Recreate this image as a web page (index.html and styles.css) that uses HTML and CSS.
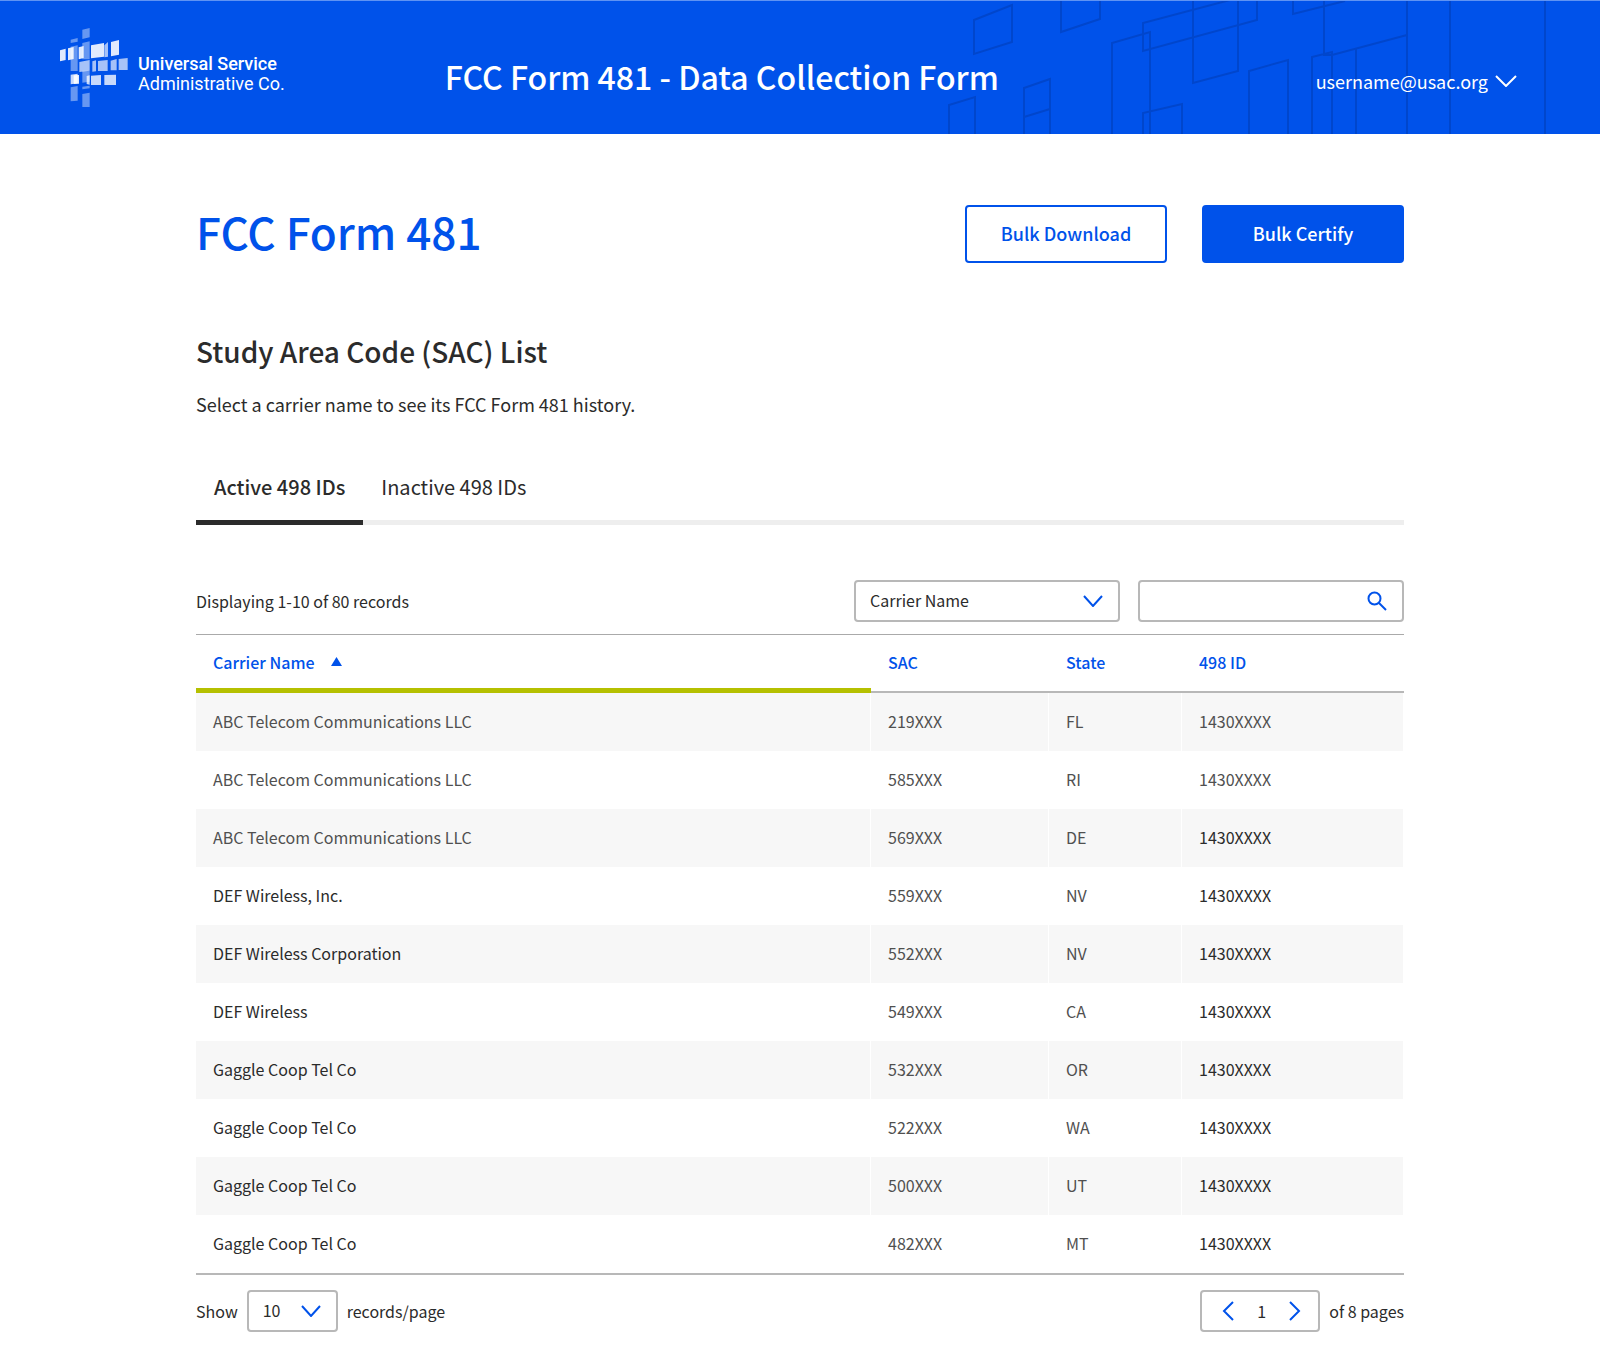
FILE: index.html
```html
<!DOCTYPE html>
<html lang="en">
<head>
<meta charset="utf-8">
<meta name="viewport" content="width=device-width, initial-scale=1">
<title>FCC Form 481 - Data Collection Form</title>
<link rel="stylesheet" href="styles.css">
</head>
<body>
<header class="site-header">
  <svg class="pattern" width="680" height="133" viewBox="920 0 680 133" aria-hidden="true">
    <path d="M974 19 1012 4V41L974 53ZM1061 0V31L1100 18V0M949 133V104L975 96V133M1024 133V87L1050 78V133M1024 116 1050 108M1112 133V42L1150 31V133M1230 -1 1143 22V50L1257 19V0M1193 0V82L1238 70V0M1143 133V112L1182 103V133M1249 133V70L1288 59V133M1293 0V13L1345 0M1324 0V54H1332L1407 34M1407 0V133M1312 133V56L1332 51V133M1356 133V47M1450 0V133M1545 0V133"/>
  </svg>
  <a class="logo" href="#">
    <svg width="68" height="80" viewBox="30 24 204 240" aria-hidden="true">
      <g fill="#fff">
        <g opacity=".4">
          <path d="M97 29 119 24V52L97 57ZM62 59 83 54V65L62 69ZM62 80 83 76V153H62ZM97 69 119 64V118H97ZM97 152H119V185L97 188ZM62 202 83 198V242L62 244ZM97 200 119 197V205L97 208ZM97 222 119 218V261H97Z"/>
        </g>
        <g opacity=".65">
          <path d="M88 126 119 120V152L88 156ZM127 124 138 121V154L127 155ZM144 123 173 120V153H144ZM182 122 200 117V151H182ZM206 117 233 114V150H206ZM163 76 174 66V110L163 112Z"/>
        </g>
        <g opacity=".78">
          <path d="M62 164 83 161V190L62 193ZM110 168 119 166V194L110 192ZM123 167 153 165V195H123ZM163 165 198 164V195H163Z"/>
        </g>
        <g opacity=".88">
          <path d="M30 91 47 86V120L30 124ZM54 85 71 81V117L54 121ZM86 82 101 78V114L86 118ZM123 76 162 69V110L123 115ZM183 66 207 60V104L183 109ZM71 166 87 165V191L71 192Z"/>
        </g>
      </g>
    </svg>
    <span class="logo-text"><strong>Universal Service</strong><span>Administrative Co.</span></span>
  </a>
  <p class="app-title">FCC Form 481 - Data Collection Form</p>
  <button class="user-menu" type="button">username@usac.org
    <svg width="22" height="12" viewBox="0 0 22 12" aria-hidden="true"><path d="M1 1 11 11 21 1"/></svg>
  </button>
</header>

<main class="page">
  <div class="page-head">
    <h1>FCC Form 481</h1>
    <div class="actions">
      <button class="btn btn-outline" type="button">Bulk Download</button>
      <button class="btn btn-solid" type="button">Bulk Certify</button>
    </div>
  </div>

  <h2>Study Area Code (SAC) List</h2>
  <p class="intro">Select a carrier name to see its FCC Form 481 history.</p>

  <div class="tabs" role="tablist">
    <button class="tab tab-active" type="button" role="tab" aria-selected="true">Active 498 IDs</button>
    <button class="tab" type="button" role="tab" aria-selected="false">Inactive 498 IDs</button>
  </div>

  <div class="toolbar">
    <p class="count">Displaying 1-10 of 80 records</p>
    <div class="filters">
      <div class="field field-wide">
        <select class="control" aria-label="Search by"><option>Carrier Name</option><option>SAC</option><option>State</option><option>498 ID</option></select>
        <svg class="field-icon" width="20" height="12" viewBox="0 0 20 12" aria-hidden="true"><path d="M1 1 10 11 19 1"/></svg>
      </div>
      <div class="field field-wide">
        <input class="control" type="search" aria-label="Search records">
        <svg class="field-icon" width="20" height="20" viewBox="0 0 20 20" aria-hidden="true"><circle cx="7.500" cy="7.500" r="6"/><path d="M12 12 19 19"/></svg>
      </div>
    </div>
  </div>

  <table class="records">
    <colgroup><col><col class="col-sac"><col class="col-state"><col class="col-id"></colgroup>
    <thead>
      <tr>
        <th class="sorted" scope="col" aria-sort="ascending"><button class="sort" type="button">Carrier Name <svg width="11" height="9" viewBox="0 0 11 9" aria-hidden="true"><path d="M5.500 0 11 9H0Z"/></svg></button></th>
        <th scope="col"><button class="sort" type="button">SAC</button></th>
        <th scope="col"><button class="sort" type="button">State</button></th>
        <th scope="col"><button class="sort" type="button">498 ID</button></th>
      </tr>
    </thead>
    <tbody>
      <tr><td>ABC Telecom Communications LLC</td><td>219XXX</td><td>FL</td><td>1430XXXX</td></tr>
      <tr><td>ABC Telecom Communications LLC</td><td>585XXX</td><td>RI</td><td>1430XXXX</td></tr>
      <tr><td>ABC Telecom Communications LLC</td><td>569XXX</td><td>DE</td><td class="strong">1430XXXX</td></tr>
      <tr><td class="strong">DEF Wireless, Inc.</td><td>559XXX</td><td>NV</td><td class="strong">1430XXXX</td></tr>
      <tr><td class="strong">DEF Wireless Corporation</td><td>552XXX</td><td>NV</td><td class="strong">1430XXXX</td></tr>
      <tr><td class="strong">DEF Wireless</td><td>549XXX</td><td>CA</td><td class="strong">1430XXXX</td></tr>
      <tr><td class="strong">Gaggle Coop Tel Co</td><td>532XXX</td><td>OR</td><td class="strong">1430XXXX</td></tr>
      <tr><td class="strong">Gaggle Coop Tel Co</td><td>522XXX</td><td>WA</td><td class="strong">1430XXXX</td></tr>
      <tr><td class="strong">Gaggle Coop Tel Co</td><td>500XXX</td><td>UT</td><td class="strong">1430XXXX</td></tr>
      <tr><td class="strong">Gaggle Coop Tel Co</td><td>482XXX</td><td>MT</td><td class="strong">1430XXXX</td></tr>
    </tbody>
  </table>

  <div class="table-foot">
    <div class="page-size">
      <label for="size">Show</label>
      <div class="field field-narrow">
        <select class="control" id="size"><option>10</option><option>20</option><option>50</option></select>
        <svg class="field-icon" width="20" height="12" viewBox="0 0 20 12" aria-hidden="true"><path d="M1 1 10 11 19 1"/></svg>
      </div>
      <span>records/page</span>
    </div>
    <nav class="pager" aria-label="Pagination">
      <div class="pager-box">
        <button class="step" type="button" aria-label="Previous page"><svg width="12" height="20" viewBox="0 0 12 20" aria-hidden="true"><path d="M11 1 2 10 11 19"/></svg></button>
        <input class="page-number" type="text" value="1" aria-label="Page number">
        <button class="step" type="button" aria-label="Next page"><svg width="12" height="20" viewBox="0 0 12 20" aria-hidden="true"><path d="M1 1 10 10 1 19"/></svg></button>
      </div>
      <span>of 8 pages</span>
    </nav>
  </div>
</main>
</body>
</html>
```

FILE: styles.css
```css
:root {
  --blue: #0052ea;
  --ink: #2b2b2b;
  --muted: #505050;
  --line: #aaaaaa;
}

* {
  box-sizing: border-box;
}

body {
  margin: 0;
  background: #fff;
  color: var(--ink);
  font-family: "Noto Sans CJK SC", "Noto Sans", sans-serif;
  font-size: 16px;
  line-height: 24px;
}

h1,
h2,
p {
  margin: 0;
}

button,
input,
select {
  font: inherit;
  color: inherit;
}

button {
  padding: 0;
  border: 0;
  background: none;
  cursor: pointer;
}

svg {
  display: block;
}

.site-header {
  position: relative;
  display: flex;
  align-items: center;
  height: 134px;
  padding: 0 83px 0 60px;
  border-top: 1px solid #5f93f3;
  background: var(--blue);
  color: #fff;
}

.pattern {
  position: absolute;
  top: 0;
  right: 0;
  fill: none;
  stroke: #0046cc;
  stroke-width: 2;
}

.logo {
  display: flex;
  align-items: center;
  gap: 10px;
  color: inherit;
  text-decoration: none;
}

.logo-text {
  display: flex;
  flex-direction: column;
  padding-top: 12px;
  font-family: Roboto, sans-serif;
  font-size: 18px;
  line-height: 20px;
}

.logo-text strong {
  font-weight: 500;
}

.app-title {
  position: relative;
  margin-left: 160px;
  padding-top: 16px;
  font-size: 32px;
  font-weight: 500;
  line-height: 40px;
}

.user-menu {
  position: relative;
  display: flex;
  align-items: center;
  gap: 7px;
  margin-left: auto;
  padding-top: 27px;
  font-size: 18px;
}

.user-menu svg {
  fill: none;
  stroke: #fff;
  stroke-width: 2;
}

.page {
  max-width: 1208px;
  margin: 0 auto;
  padding: 71px 0 35px;
}

.page-head {
  display: flex;
  align-items: center;
  justify-content: space-between;
}

h1 {
  padding-bottom: 6px;
  color: var(--blue);
  font-size: 44px;
  font-weight: 500;
  line-height: 52px;
}

.actions {
  display: flex;
  gap: 35px;
}

.btn {
  width: 202px;
  height: 58px;
  padding-bottom: 2px;
  border: 2px solid var(--blue);
  border-radius: 4px;
  font-size: 18px;
  font-weight: 500;
}

.btn-outline {
  background: #fff;
  color: var(--blue);
}

.btn-solid {
  background: var(--blue);
  color: #fff;
}

h2 {
  margin-top: 68px;
  font-size: 28px;
  font-weight: 500;
  line-height: 40px;
}

.intro {
  margin-top: 21px;
  font-size: 18px;
}

.tabs {
  display: flex;
  margin-top: 49px;
  box-shadow: inset 0 -5px #eeeeee;
}

.tab {
  height: 60px;
  padding: 0 18px 11px;
  border-bottom: 5px solid transparent;
  font-size: 20px;
}

.tab-active {
  border-color: var(--ink);
  font-weight: 500;
}

.toolbar {
  display: flex;
  align-items: center;
  justify-content: space-between;
  padding: 55px 0 12px;
}

.filters {
  display: flex;
  gap: 18px;
}

.field {
  position: relative;
}

.field-wide {
  width: 266px;
}

.field-narrow {
  width: 91px;
}

.control {
  width: 100%;
  height: 42px;
  padding: 0 14px 2px;
  border: 2px solid #b8b8b8;
  border-radius: 4px;
  background: #fff;
  appearance: none;
}

.field-icon {
  position: absolute;
  top: 0;
  right: 17px;
  bottom: 0;
  margin: auto 0;
  fill: none;
  stroke: var(--blue);
  stroke-width: 2;
  pointer-events: none;
}

.records {
  width: 100%;
  border-collapse: separate;
  border-spacing: 0;
  border-top: 1px solid var(--line);
  border-bottom: 2px solid #b8b8b8;
  table-layout: fixed;
}

.col-sac {
  width: 178px;
}

.col-state {
  width: 133px;
}

.col-id {
  width: 222px;
}

th {
  height: 58px;
  padding: 0 17px 3px;
  border-bottom: 2px solid #b8b8b8;
  text-align: left;
}

.sorted {
  padding-bottom: 0;
  border-bottom: 5px solid #b5c000;
}

.sort {
  display: flex;
  align-items: center;
  gap: 16px;
  color: var(--blue);
  font-weight: 500;
}

.sort svg {
  fill: var(--blue);
}

td {
  height: 58px;
  padding: 0 17px 2px;
  border-right: 1px solid #fff;
  color: var(--muted);
}

tbody tr:nth-child(odd) {
  background: #f7f7f7;
}

td.strong {
  color: var(--ink);
}

.table-foot,
.page-size,
.pager,
.pager-box {
  display: flex;
  align-items: center;
}

.table-foot {
  justify-content: space-between;
  padding-top: 15px;
}

.page-size,
.pager {
  gap: 9px;
}

.pager-box {
  justify-content: space-between;
  width: 120px;
  height: 42px;
  padding: 0 17px 0 20px;
  border: 2px solid #b8b8b8;
  border-radius: 4px;
}

.page-number {
  width: 30px;
  padding: 0;
  border: 0;
  background: none;
  text-align: center;
}

.step svg {
  fill: none;
  stroke: var(--blue);
  stroke-width: 2;
}
```
